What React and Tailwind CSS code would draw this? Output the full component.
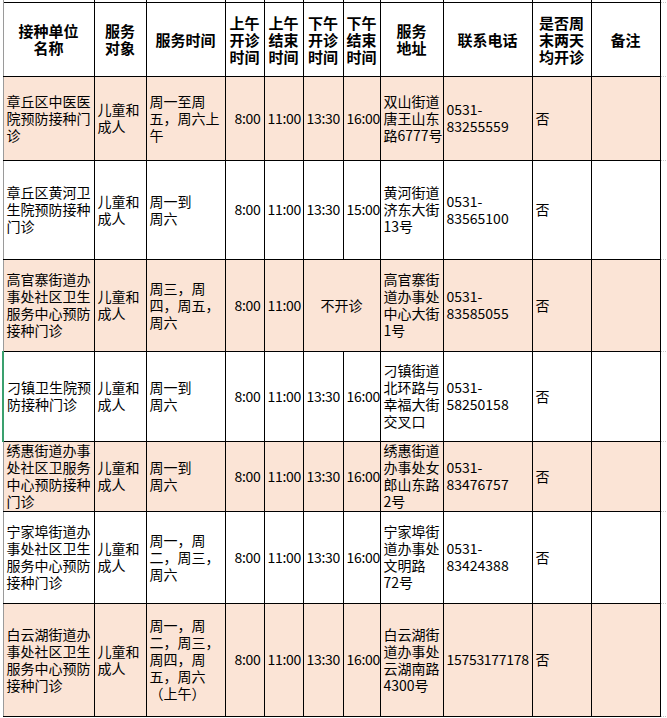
import React from "react";

const PEACH = "bg-[#fbe4d6]";

const rows = [
  {
    bg: PEACH, h: "h-[84px]",
    name: ["章丘区中医医", "院预防接种门", "诊"],
    time: ["周一至周", "五，周六上", "午"],
    pm: ["13:30", "16:00"],
    addr: ["双山街道", "唐王山东", "路6777号"],
    phone: ["0531-", "83255559"],
  },
  {
    bg: "bg-white", h: "h-[99px]",
    name: ["章丘区黄河卫", "生院预防接种", "门诊"],
    time: ["周一到", "周六"],
    pm: ["13:30", "15:00"],
    addr: ["黄河街道", "济东大街", "13号"],
    phone: ["0531-", "83565100"],
  },
  {
    bg: PEACH, h: "h-[92px]",
    name: ["高官寨街道办", "事处社区卫生", "服务中心预防", "接种门诊"],
    time: ["周三，周", "四，周五，", "周六"],
    pm: null,
    addr: ["高官寨街", "道办事处", "中心大街", "1号"],
    phone: ["0531-", "83585055"],
  },
  {
    bg: "bg-white", h: "h-[90px]", green: true,
    name: ["刁镇卫生院预", "防接种门诊"],
    time: ["周一到", "周六"],
    pm: ["13:30", "16:00"],
    addr: ["刁镇街道", "北环路与", "幸福大街", "交叉口"],
    phone: ["0531-", "58250158"],
  },
  {
    bg: PEACH, h: "h-[70px]",
    name: ["绣惠街道办事", "处社区卫服务", "中心预防接种", "门诊"],
    time: ["周一到", "周六"],
    pm: ["13:30", "16:00"],
    addr: ["绣惠街道", "办事处女", "郎山东路", "2号"],
    phone: ["0531-", "83476757"],
  },
  {
    bg: "bg-white", h: "h-[92px]",
    name: ["宁家埠街道办", "事处社区卫生", "服务中心预防", "接种门诊"],
    time: ["周一，周", "二，周三，", "周六"],
    pm: ["13:30", "16:00"],
    addr: ["宁家埠街", "道办事处", "文明路", "72号"],
    phone: ["0531-", "83424388"],
  },
  {
    bg: PEACH, h: "h-[113px]",
    name: ["白云湖街道办", "事处社区卫生", "服务中心预防", "接种门诊"],
    time: ["周一，周", "二，周三，", "周四，周", "五，周六", "（上午）"],
    pm: ["13:30", "16:00"],
    addr: ["白云湖街", "道办事处", "云湖南路", "4300号"],
    phone: ["15753177178"],
    phoneRight: true,
  },
];

const Lines = ({ lines }) => (
  <>
    {lines.map((l, i) => (
      <div key={i} className="whitespace-nowrap">{l}</div>
    ))}
  </>
);

const td = "border border-black px-[3px] py-0 align-middle overflow-hidden";
const th = "border border-black px-[1px] py-0 align-middle text-center font-bold text-[15px]";

export default function App() {
  return (
    <div
      className="w-[667px] h-[718px] bg-white overflow-hidden text-black"
      style={{ fontFamily: '"Noto Sans CJK SC", "Noto Sans", sans-serif' }}
    >
      <table className="table-fixed border-collapse w-[665px] ml-[2px] text-[14px] leading-[17px]">
        <colgroup>
          <col className="w-[91px]" />
          <col className="w-[52px]" />
          <col className="w-[79px]" />
          <col className="w-[39px]" />
          <col className="w-[39px]" />
          <col className="w-[40px]" />
          <col className="w-[37px]" />
          <col className="w-[63px]" />
          <col className="w-[89px]" />
          <col className="w-[59px]" />
          <col className="w-[69px]" />
          <col className="w-[8px]" />
        </colgroup>
        <tbody>
          <tr className="h-[2px]">
            {Array.from({ length: 11 }).map((_, i) => (
              <td
                key={i}
                className={
                  "p-0 h-[2px] leading-[0] border-x border-black " +
                  (i === 0 ? "border-l-[#9a9a9a]" : "")
                }
              />
            ))}
            <td className="p-0 h-[2px] leading-[0]" />
          </tr>
          <tr className="h-[74px] bg-white">
            <th className={th + " border-l-[#9a9a9a] leading-[17px]"}>
              <div>接种单位</div>
              <div>名称</div>
            </th>
            <th className={th + " leading-[17px]"}>
              <div>服务</div>
              <div>对象</div>
            </th>
            <th className={th}>服务时间</th>
            <th className={th + " leading-[17px]"}><div>上午</div><div>开诊</div><div>时间</div></th>
            <th className={th + " leading-[17px]"}><div>上午</div><div>结束</div><div>时间</div></th>
            <th className={th + " leading-[17px]"}><div>下午</div><div>开诊</div><div>时间</div></th>
            <th className={th + " leading-[17px]"}><div>下午</div><div>结束</div><div>时间</div></th>
            <th className={th + " leading-[17px]"}><div>服务</div><div>地址</div></th>
            <th className={th}>联系电话</th>
            <th className={th + " leading-[17px]"}><div>是否周</div><div>末两天</div><div>均开诊</div></th>
            <th className={th}>备注</th>
            <td className="border-y border-dotted border-[#c8c8c8] p-0" />
          </tr>
          {rows.map((r, i) => (
            <tr key={i} className={r.h}>
              <td
                className={
                  td + " " + r.bg + " " +
                  (r.green ? "border-l-2 border-l-[#3aa06e]" : "border-l-[#9a9a9a]")
                }
              >
                <Lines lines={r.name} />
              </td>
              <td className={td + " " + r.bg}>
                <Lines lines={["儿童和", "成人"]} />
              </td>
              <td className={td + " " + r.bg}>
                <Lines lines={r.time} />
              </td>
              <td className={td + " " + r.bg + " text-right pr-[3px] pl-0 tracking-[-0.3px]"}>8:00</td>
              <td className={td + " " + r.bg + " text-right px-[1px] tracking-[-0.3px]"}>11:00</td>
              {r.pm ? (
                <>
                  <td className={td + " " + r.bg + " text-right px-[1px] tracking-[-0.3px]"}>{r.pm[0]}</td>
                  <td className={td + " " + r.bg + " text-right px-[1px] tracking-[-0.3px]"}>{r.pm[1]}</td>
                </>
              ) : (
                <td colSpan={2} className={td + " " + r.bg + " text-center"}>不开诊</td>
              )}
              <td className={td + " " + r.bg + " px-[2px]"}>
                <Lines lines={r.addr} />
              </td>
              <td
                className={
                  td + " " + r.bg + (r.phoneRight ? " text-right tracking-[-0.3px]" : "")
                }
              >
                <Lines lines={r.phone} />
              </td>
              <td className={td + " " + r.bg}>否</td>
              <td className={td + " " + r.bg} />
              <td className="border-y border-dotted border-[#c8c8c8] p-0 bg-white" />
            </tr>
          ))}
        </tbody>
      </table>
    </div>
  );
}
